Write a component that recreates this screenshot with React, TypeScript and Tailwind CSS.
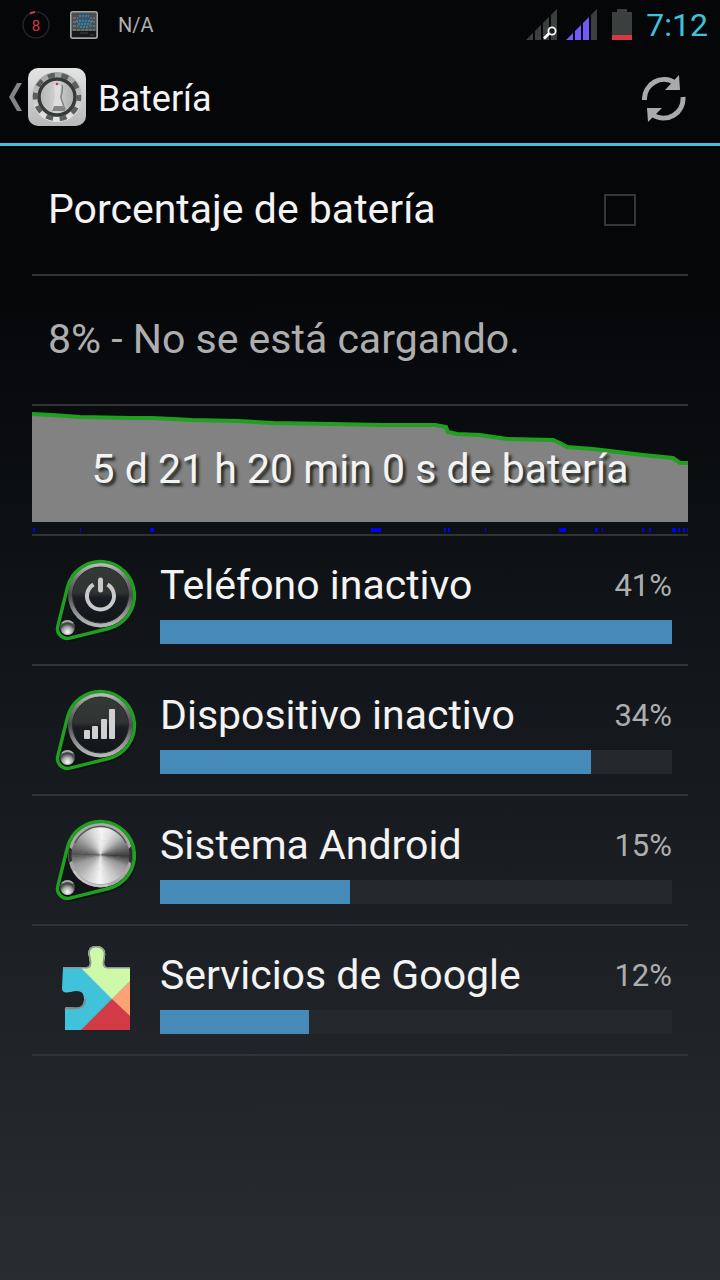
import React, { useState } from "react";

const CHART_LINE =
  "0,8 20,9 48,11 98,12 120,12 160,14 206,15 241,17 300,18 350,19 403,19 414,21 416,26 425,28 448,29 475,33 521,34 528,37 535,41 561,43 611,49 641,52 648,57 656,57";

// [start, width] of the periods with the screen on
const SCREEN_ON = [
  [1, 2], [48, 1], [118, 4], [339, 10], [412, 2], [416, 2], [453, 1],
  [527, 7], [563, 3], [570, 1], [610, 2], [617, 2], [640, 4], [646, 2],
  [651, 2], [655, 1],
];

const KNOB_OUTLINE =
  "M19.5 35.2 A34 34 0 1 1 60.8 76.5 L21.9 86.2 A10 10 0 0 1 9.8 74.1 Z";

// brightness around the brushed metal disc, clockwise from the top
const METAL = [245, 225, 185, 120, 60, 150, 185, 215, 245, 215, 180, 155, 85, 130, 175, 215, 245];

const metalWedges = Array.from({ length: 96 }, (_, i) => {
  const pos = (i / 96) * 16;
  const k = Math.floor(pos);
  const v = Math.round(METAL[k] + (METAL[k + 1] - METAL[k]) * (pos - k));
  const a = (i / 96) * Math.PI * 2;
  const b = ((i + 1.4) / 96) * Math.PI * 2;
  return {
    fill: `rgb(${v},${v},${v})`,
    d: `M52.5 43 L${52.5 + 29 * Math.sin(a)} ${43 - 29 * Math.cos(a)} L${52.5 + 29 * Math.sin(b)} ${43 - 29 * Math.cos(b)} Z`,
  };
});

const Knob = ({ name, children }: { name: string; children?: React.ReactNode }) => (
  <svg viewBox="0 0 96 96" className="size-24 shrink-0" aria-hidden="true">
    <defs>
      <linearGradient id={`${name}-rim`} x1="0" y1="0" x2="0" y2="1">
        <stop offset="0" stopColor="#c4c4c4" />
        <stop offset="0.25" stopColor="#777" />
        <stop offset="0.5" stopColor="#4a4d4e" />
        <stop offset="0.75" stopColor="#8c8c8c" />
        <stop offset="1" stopColor="#bcbcbc" />
      </linearGradient>
      <linearGradient id={`${name}-face`} x1="0" y1="0" x2="0" y2="1">
        <stop offset="0" stopColor="#343936" />
        <stop offset="0.45" stopColor="#303432" />
        <stop offset="0.55" stopColor="#1a1e23" />
        <stop offset="1" stopColor="#111518" />
      </linearGradient>
      <radialGradient id={`${name}-ball`} cx="0.5" cy="0.8" r="0.75">
        <stop offset="0" stopColor="#fff" />
        <stop offset="0.45" stopColor="#a5a5a5" />
        <stop offset="0.75" stopColor="#3b3f3f" />
        <stop offset="1" stopColor="#8b8b8b" />
      </radialGradient>
    </defs>
    <path d={KNOB_OUTLINE} transform="translate(2 3)" fill="#090b0d" opacity="0.7" />
    <path d={KNOB_OUTLINE} fill="#111416" />
    <circle cx="52.5" cy="43" r="32.5" fill={`url(#${name}-rim)`} />
    <circle cx="52.5" cy="43" r="28" fill={`url(#${name}-face)`} stroke="#252a2b" />
    {children}
    <circle cx="19.5" cy="75.5" r="7.5" fill={`url(#${name}-ball)`} />
    <path d="M14 71 Q19.5 67 25 71" fill="none" stroke="#aaa" strokeWidth="1.5" />
    <path d={KNOB_OUTLINE} fill="none" stroke="#1fa01f" strokeWidth="3.4" />
  </svg>
);

const PowerKnob = () => (
  <Knob name="power">
    <path d="M45.5 32.5 A13.5 13.5 0 1 0 59.5 32.5" fill="none" stroke="#c9c9c9" strokeWidth="4" />
    <path d="M52.5 28 V38" stroke="#c9c9c9" strokeWidth="5" strokeLinecap="round" />
  </Knob>
);

const SignalKnob = () => (
  <Knob name="signal">
    <g fill="#d0d0d0">
      <rect x="36" y="48" width="6" height="9" rx="1" />
      <rect x="44" y="44" width="6" height="13" rx="1" />
      <rect x="53" y="37" width="6" height="20" rx="1" />
      <rect x="61" y="27" width="6" height="30" rx="1" />
    </g>
  </Knob>
);

const MetalKnob = () => (
  <Knob name="metal">
    <circle cx="52.5" cy="43" r="32" fill="#a9a9a9" />
    <path d="M20.5 43 a32 32 0 0 1 1 -8 L30 43 L21.5 51 Z M84.5 43 l-1 -9 L75 43 L83.5 52 Z" fill="#292d2d" />
    <g>
      {metalWedges.map((w) => (
        <path key={w.d} d={w.d} fill={w.fill} />
      ))}
    </g>
    <path d="M27 31 A28 28 0 0 1 78 31" fill="none" stroke="#555" strokeWidth="1.5" />
    <path d="M26 59 A31 31 0 0 0 60 73" fill="none" stroke="#c9c9c9" strokeWidth="2" />
  </Knob>
);

const PlayServicesIcon = () => (
  <svg viewBox="0 0 96 96" className="size-24 shrink-0" aria-hidden="true">
    <defs>
      <clipPath id="puzzle">
        <path d="M15 25 H39 C43 25 42 19 41 15 C39 8 42 4 48 4 C55 4 58 8 57 14 C56 20 55 25 59 25 H82 V88 H17 V68 C16 64 20 65 24 65 C27 66 36 67 36 57 C36 49 31 49 27 49 C22 50 14 53 14 46 Z" />
      </clipPath>
    </defs>
    <g clipPath="url(#puzzle)">
      <path d="M0 0 H96 V96 H0 Z" fill="#3fc2da" />
      <path d="M32 25 V0 H96 V25 L64 57 Z" fill="#cdf9a9" />
      <path d="M82 39 L64 57 L82 75 Z" fill="#fba276" />
      <path d="M33 88 L64 57 L82 74 V88 Z" fill="#d23b46" />
      <path d="M15 25 H39 C43 25 42 19 41 15 C39 8 42 4 48 4 C55 4 58 8 57 14 C56 20 55 25 59 25 H82" fill="none" stroke="#8e9690" strokeWidth="3" />
      <path d="M17 65 C27 66 36 67 36 57" fill="none" stroke="#858a89" strokeWidth="4" />
    </g>
  </svg>
);

const SettingsIcon = () => (
  <svg viewBox="0 0 58 58" className="size-[58px]" aria-hidden="true">
    <defs>
      <linearGradient id="plate" x1="0" y1="0" x2="0" y2="1">
        <stop offset="0" stopColor="#e4e4e4" />
        <stop offset="1" stopColor="#b8b8b8" />
      </linearGradient>
      <linearGradient id="teeth" x1="0" y1="0" x2="0" y2="1">
        <stop offset="0" stopColor="#a2a4a3" />
        <stop offset="1" stopColor="#e6e6e6" />
      </linearGradient>
      <linearGradient id="dial" x1="0" y1="0" x2="1" y2="0">
        <stop offset="0" stopColor="#b4b4b4" />
        <stop offset="0.5" stopColor="#d2d2d2" />
        <stop offset="1" stopColor="#a8a8a8" />
      </linearGradient>
    </defs>
    <rect width="58" height="58" rx="10" fill="url(#plate)" />
    <circle cx="29" cy="29" r="22.5" fill="none" stroke="url(#teeth)" strokeWidth="5" />
    <circle cx="29" cy="29" r="22" fill="none" stroke="#5a5f5d" strokeWidth="4.5" strokeDasharray="7 6.82" strokeDashoffset="3" />
    <circle cx="29" cy="29" r="18" fill="url(#dial)" stroke="#343a38" strokeWidth="3.5" />
    <path d="M26 17 H33 L32 28 L37 42 H24 L27 28 Z" fill="#dedede" />
    <path d="M34 17 C36 22 33 25 33 30 L37 42" fill="none" stroke="#838383" strokeWidth="1.5" />
    <path d="M26 38 H35 L37 43 H24 Z" fill="#858585" />
    <circle cx="29" cy="16" r="1.3" fill="#df3039" />
  </svg>
);

const RefreshIcon = () => (
  <svg viewBox="0 0 44 48" className="h-12 w-11" aria-hidden="true">
    <path d="M2.5 25 A19.5 19.5 0 0 1 33 8" fill="none" stroke="#aaa" strokeWidth="5" />
    <path d="M37 0 L38 15 H23 Z" fill="#aaa" />
    <path d="M41 22 A19.5 19.5 0 0 1 11 40" fill="none" stroke="#aaa" strokeWidth="5" />
    <path d="M5 33 H20 L6 47 Z" fill="#aaa" />
  </svg>
);

const SignalBars = ({ level }: { level: number }) => {
  const bars = ["M0 31 L7 24 V31 Z", "M9 31 V22 L15 16 V31 Z", "M17 31 V14 L23 8 V31 Z", "M25 31 V6 L31 0 V31 Z"];
  return (
    <svg viewBox="0 0 32 32" className="size-8" aria-hidden="true">
      {bars.map((d, i) => (
        <path key={d} d={d} fill={i < level ? "#7259fb" : "#3b403e"} />
      ))}
      {level === 0 && (
        <g stroke="#fff" strokeWidth="1.8" fill="#1b1f1f">
          <path d="M18 29.5 L23.5 24" strokeWidth="2.6" />
          <circle cx="26" cy="22" r="3.6" />
        </g>
      )}
    </svg>
  );
};

const StatusBar = () => (
  <div className="flex h-[50px] items-center justify-between pl-[22px] pr-3">
    <div className="flex items-center gap-5">
      <svg viewBox="0 0 28 28" className="size-7" aria-hidden="true">
        <circle cx="14" cy="14" r="13" fill="none" stroke="#202427" strokeWidth="1.5" />
        <path d="M8 2.5 A13 13 0 0 1 13 1" fill="none" stroke="#d23b46" strokeWidth="2" />
        <text x="14" y="19.5" textAnchor="middle" fontSize="15" fontFamily="Roboto, sans-serif" fill="#d23b46">
          8
        </text>
      </svg>
      <svg viewBox="0 0 28 28" className="size-7" aria-hidden="true">
        <rect x="0.75" y="0.75" width="26.5" height="26.5" rx="2" fill="#4a5052" stroke="#a5a5a5" strokeWidth="1.5" />
        <path d="M2 20 H26 V26 H2 Z" fill="#15191c" />
        <path d="M3 7 H25 M3 11 H25 M3 15 H25 M3 19 H25" stroke="#888" strokeDasharray="3 1" />
        <rect x="8" y="3" width="12" height="14" rx="4" fill="#3c5866" />
        <path d="M9 5 H19 M6 10 H23 M8 13 H21 M10 16 H18" stroke="#3a88b5" strokeWidth="1.5" strokeDasharray="2 1" />
        <path d="M10 22 H18 M20 24 H24" stroke="#444" />
      </svg>
      <span className="text-xl leading-7 text-[#b0b0b0]">N/A</span>
    </div>
    <div className="flex items-center gap-2">
      <SignalBars level={0} />
      <SignalBars level={3} />
      <svg viewBox="2 0 32 32" className="size-8" aria-hidden="true">
        <path d="M8 4 Q8 3 9 3 H13 V0 H23 V3 H27 Q28 3 28 4 V27 H8 Z" fill="#3b403e" />
        <path d="M8 26 H28 V31 H8 Z" fill="#d23b46" />
      </svg>
      <span className="text-[32px] leading-9 text-[#3fc2da]">7:12</span>
    </div>
  </div>
);

const usage = [
  { name: "Teléfono inactivo", percent: 41, bar: 100, icon: <PowerKnob /> },
  { name: "Dispositivo inactivo", percent: 34, bar: 84.2, icon: <SignalKnob /> },
  { name: "Sistema Android", percent: 15, bar: 37.1, icon: <MetalKnob /> },
  { name: "Servicios de Google", percent: 12, bar: 29.1, icon: <PlayServicesIcon /> },
];

const App = () => {
  const [showPercent, setShowPercent] = useState(false);

  return (
    <div className="flex min-h-screen flex-col bg-[#050608] font-['Roboto',sans-serif] text-[#f3f3f3]">
      <StatusBar />
      <header className="flex h-24 items-center justify-between border-b-3 border-[#3fc2da] pl-2 pr-[34px]">
        <div className="flex items-center gap-3">
          <button type="button" aria-label="Atrás" className="flex items-center gap-1">
            <svg viewBox="0 0 16 30" className="h-[30px] w-4" aria-hidden="true">
              <path d="M9 1 H14 L6 15 L14 29 H9 L1 15 Z" fill="#858585" />
            </svg>
            <SettingsIcon />
          </button>
          <h1 className="pt-1 text-4xl">Batería</h1>
        </div>
        <button type="button" aria-label="Actualizar" className="pt-1">
          <RefreshIcon />
        </button>
      </header>

      <main className="grow bg-linear-to-b from-[#050608] from-10% via-[#14181c] via-50% to-[#292d32] px-8">
        <label className="flex h-[130px] items-center justify-between border-b-2 border-[#303433] pl-4 pr-[52px] text-[41px]">
          Porcentaje de batería
          <input
            type="checkbox"
            checked={showPercent}
            onChange={(e) => setShowPercent(e.target.checked)}
            className="size-8 appearance-none border-2 border-[#343837] checked:bg-[#3fc2da]"
          />
        </label>
        <p className="flex h-[130px] items-center border-b-2 border-[#303433] pl-4 text-[41px] text-[#aeaeae]">
          8% - No se está cargando.
        </p>
        <div className="relative h-[130px] border-b-2 border-[#303433]">
          <svg viewBox="0 0 656 128" preserveAspectRatio="none" className="h-32 w-full" aria-hidden="true">
            <polygon points={`${CHART_LINE} 656,116 0,116`} fill="#828282" />
            <polyline points={CHART_LINE} fill="none" stroke="#1fa01f" strokeWidth="4" />
            {SCREEN_ON.map(([x, w]) => (
              <rect key={x} x={x} y="122" width={w} height="4" fill="#0000fa" />
            ))}
          </svg>
          <p className="absolute inset-0 flex items-center justify-center text-[41px] [text-shadow:3px_3px_3px_#202624]">
            5 d 21 h 20 min 0 s de batería
          </p>
        </div>
        <ul>
          {usage.map((item) => (
            <li key={item.name} className="flex h-[130px] items-center gap-4 border-b-2 border-[#303433] px-4">
              {item.icon}
              <div className="grow pt-1">
                <div className="mb-2 flex h-13 items-center justify-between">
                  <span className="text-[41px]">{item.name}</span>
                  <span className="text-[31px] text-[#aeaeae]">{item.percent}%</span>
                </div>
                <div className="h-6 bg-[#25292d]">
                  <div className="h-full bg-[#468ab9]" style={{ width: `${item.bar}%` }} />
                </div>
              </div>
            </li>
          ))}
        </ul>
      </main>
    </div>
  );
};

export default App;
